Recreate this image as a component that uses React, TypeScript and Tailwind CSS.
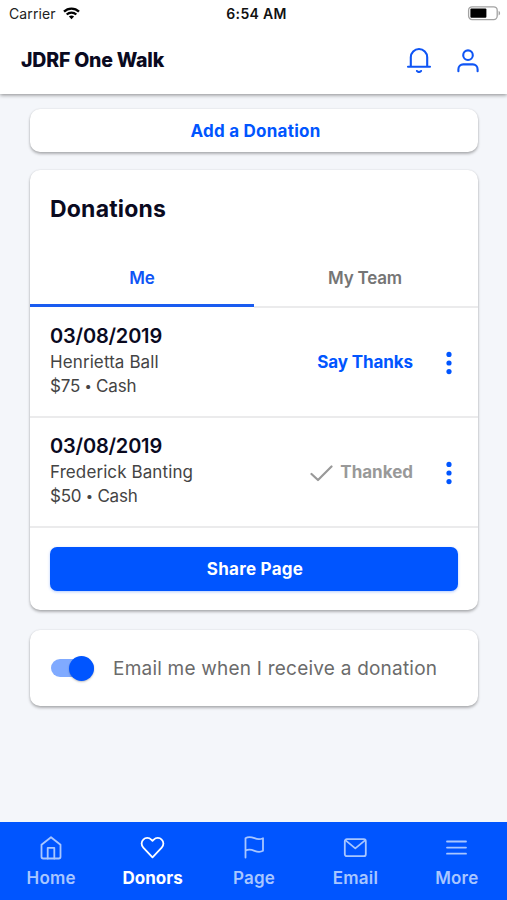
import clsx from 'clsx'
import type { ReactNode } from 'react'

type Donation = {
  id: number
  date: string
  name: string
  amount: string
  method: string
  thanked: boolean
}

const donations: Donation[] = [
  { id: 1, date: '03/08/2019', name: 'Henrietta Ball', amount: '$75', method: 'Cash', thanked: false },
  { id: 2, date: '03/08/2019', name: 'Frederick Banting', amount: '$50', method: 'Cash', thanked: true },
]

const card = 'rounded-[10px] bg-white shadow-[0_2px_3px_rgba(0,0,0,0.28),0_0_2px_rgba(0,0,0,0.12)]'

function StatusBar() {
  return (
    <div className="grid h-7 grid-cols-3 items-center pl-[9px] pr-[6px] text-[14px] text-[#222]">
      <div className="flex items-center gap-[7px]">
        <span className="pb-px tracking-[0.1px]">Carrier</span>
        <svg className="-mt-px" width="17" height="13" viewBox="0 0 17 13" fill="none" stroke="#000" strokeWidth="2.3">
          <path d="M1 4.6a10.7 10.7 0 0 1 15 0" />
          <path d="M3.7 7.5a6.9 6.9 0 0 1 9.6 0" />
          <path d="M8.5 12.2 5.9 9.6a3.8 3.8 0 0 1 5.2 0z" fill="#000" stroke="none" />
        </svg>
      </div>
      <span className="pb-px pl-[3px] text-center font-semibold tracking-[0.3px] text-[#111]">6:54 AM</span>
      <svg className="-mt-px justify-self-end" width="34" height="15" viewBox="0 0 34 15">
        <rect x="1.6" y="0.8" width="28.6" height="12.8" rx="3.5" fill="#fff" stroke="#a3a3a3" strokeWidth="1.3" />
        <rect x="3.4" y="2.6" width="16" height="9.2" rx="1" fill="#000" />
        <path d="M31.6 5v4.4c1-.4 1.5-1.2 1.5-2.2s-.5-1.800-1.5-2.200z" fill="#a3a3a3" />
      </svg>
    </div>
  )
}

function Header() {
  return (
    <header className="relative z-10 h-[94px] bg-white shadow-[0_1px_4px_rgba(0,0,0,0.45)]">
      <StatusBar />
      <div className="flex h-[65px] items-center justify-between pl-[21px] pr-[27px]">
        <h1 className="text-[19.5px] font-extrabold tracking-[-0.2px] text-[#0a0a1f]">JDRF One Walk</h1>
        <div className="flex items-center gap-6 text-[#0f55f5]">
          <svg className="-mt-px" width="26" height="26" viewBox="0 0 26 26" fill="none" stroke="currentColor" strokeWidth="2.1" strokeLinecap="round" strokeLinejoin="round">
            <path d="M2 19.8h22M4.800 19.5v-9.300a8.200 8.200 0 0 1 16.400 0v9.3" />
            <path d="M11 24c.8 1.3 3.2 1.3 4 0" />
          </svg>
          <svg width="24" height="26" viewBox="0 0 24 26" fill="none" stroke="currentColor" strokeWidth="2.1" strokeLinecap="round">
            <circle cx="12" cy="7.2" r="4.8" />
            <path d="M2.4 23.2v-2a4.8 4.8 0 0 1 4.8-4.8h9.6a4.8 4.8 0 0 1 4.8 4.8v2" />
          </svg>
        </div>
      </div>
    </header>
  )
}

function DonationRow({ donation }: { donation: Donation }) {
  return (
    <li className="flex h-[110px] items-center border-b-2 border-[#ebebec] pl-5 pr-[26px]">
      <div className="flex-1 pb-1 text-[17px] leading-6 text-[#444]">
        <p className="text-[20px] leading-[27px] font-semibold tracking-[-0.2px] text-[#0a0a1f]">{donation.date}</p>
        <p className="tracking-[0.1px]">{donation.name}</p>
        <p className="flex items-center tracking-[-0.2px]">
          {donation.amount}
          <span className="w-[16px] text-center text-[13px]">•</span>
          {donation.method}
        </p>
      </div>
      {donation.thanked ? (
        <span className="flex items-center gap-[7px] pt-[2px] text-[17px] font-bold text-[#999]">
          <svg width="23" height="17" viewBox="0 0 23 17" fill="none" stroke="currentColor" strokeWidth="2.2" strokeLinecap="round" strokeLinejoin="round">
            <path d="m1.5 9 6.5 6L21.5 1.5" />
          </svg>
          Thanked
        </span>
      ) : (
        <button className="pt-[2px] text-[17px] font-bold tracking-[-0.1px] text-[#0055ff]">Say Thanks</button>
      )}
      <svg className="mt-[2px] ml-[33px]" width="6" height="24" viewBox="0 0 6 24" fill="#0055ff">
        <circle cx="3" cy="3.4" r="2.6" />
        <circle cx="3" cy="12" r="2.6" />
        <circle cx="3" cy="20.6" r="2.6" />
      </svg>
    </li>
  )
}

function NavItem({ label, active, children }: { label: string; active?: boolean; children: ReactNode }) {
  return (
    <a className={clsx('flex flex-1 flex-col items-center pt-[13px]', active ? 'text-white' : 'text-[#a8c6ff]')}>
      <svg width="26" height="26" viewBox="0 0 26 26" fill="none" stroke="currentColor" strokeWidth="1.8" strokeLinecap="round" strokeLinejoin="round">
        {children}
      </svg>
      <span className={clsx('mt-[5px] pl-px text-[17px] leading-6', active ? 'font-bold' : 'font-semibold tracking-[0.2px]')}>{label}</span>
    </a>
  )
}

export default function App() {
  return (
    <div className="flex h-[900px] w-full flex-col overflow-hidden bg-[#f4f6fa] font-['Inter',sans-serif]">
      <Header />
      <main className="flex flex-1 flex-col pt-[15px] pr-[29px] pl-[30px]">
        <button className={clsx(card, 'h-[43px] pt-[2px] pl-[3px] text-[17px] font-bold tracking-[0.25px] text-[#0055ff]')}>Add a Donation</button>

        <section className={clsx(card, 'mt-[18px] h-[440px]')}>
          <h2 className="h-[77px] px-5 pt-[22px] text-[23px] leading-[34px] font-bold tracking-[0.2px] text-[#0a0a1f]">Donations</h2>
          <div className="grid h-[61px] grid-cols-2 text-[17px] font-semibold">
            <button className="mb-px border-b-3 border-[#1a5cf0] pt-[6px] text-[#0f55f5]">Me</button>
            <button className="border-b-2 border-[#ebebec] pt-1 pr-[2px] tracking-[-0.2px] text-[#757575]">My Team</button>
          </div>
          <ul>
            {donations.map((d) => (
              <DonationRow key={d.id} donation={d} />
            ))}
          </ul>
          <div className="px-5 pt-[19px]">
            <button className="h-[44px] w-full rounded-[7px] bg-[#0055ff] pt-px pl-[2px] text-[17px] font-bold tracking-[0.25px] text-white shadow-[0_1px_3px_rgba(0,85,255,0.3)]">
              Share Page
            </button>
          </div>
        </section>

        <section className={clsx(card, 'mt-[20px] flex h-[76px] items-center pl-[21px]')}>
          <div className="flex h-[18px] w-[43px] items-center justify-end rounded-full bg-[#80aaff]">
            <span className="size-[25px] shrink-0 rounded-full bg-[#0055ff] shadow-[0_1px_2px_rgba(0,0,0,0.25)]" />
          </div>
          <span className="ml-[19px] pt-[2px] text-[19px] tracking-[0.22px] text-[#6b6b6b]">Email me when I receive a donation</span>
        </section>
      </main>

      <nav className="flex h-[78px] bg-[#0055ff]">
        <NavItem label="Home">
          <path d="M3.5 9.8 13 2.2l9.5 7.6v12a1.7 1.7 0 0 1-1.7 1.7H5.200a1.700 1.700 0 0 1-1.700-1.700z" />
          <path d="M9.7 23.5V12.8h6.600v10.700" />
        </NavItem>
        <NavItem label="Donors" active>
          <path d="M13.500 22.300 4.300 12.600a5.600 5.600 0 0 1 0-8 5.500 5.500 0 0 1 7.900 0l1.300 1.300 1.300-1.300a5.500 5.500 0 0 1 7.900 0 5.600 5.600 0 0 1 0 8z" />
        </NavItem>
        <NavItem label="Page">
          <path d="M4.500 22.500V3.200c3-2 6-1.200 9 0s6 1.200 8.500 0v12.600c-2.500 1.400-5.500 1.200-8.500 0s-6-2-9 0" />
        </NavItem>
        <NavItem label="Email">
          <rect x="2.800" y="4.200" width="21" height="17" rx="2" />
          <path d="m3.600 5.400 9.700 8 9.700-8" />
        </NavItem>
        <NavItem label="More">
          <path d="M4 6.500h19M4 12.600h19M4 18.700h19" />
        </NavItem>
      </nav>
    </div>
  )
}
